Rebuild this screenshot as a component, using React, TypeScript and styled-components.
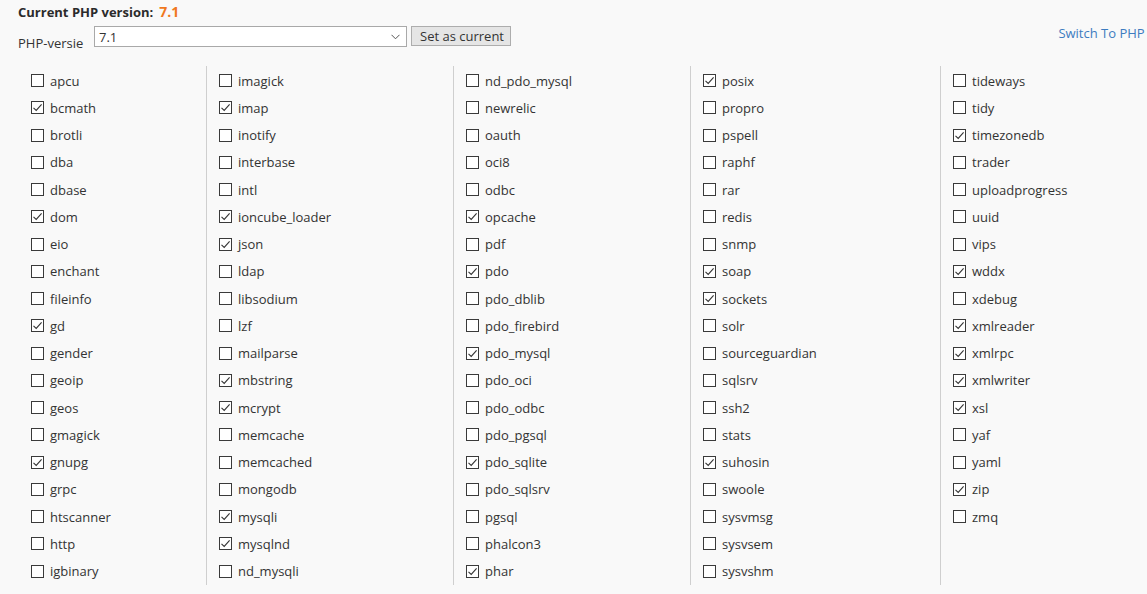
import React from 'react'
import styled, { createGlobalStyle } from 'styled-components'

const GlobalStyle = createGlobalStyle`
  html, body {
    margin: 0;
    padding: 0;
    background: #f9f9f9;
    overflow: hidden;
  }
  body {
    font-family: "Open Sans", "Liberation Sans", sans-serif;
    font-size: 13px;
    color: #333;
  }
`

const columns: string[][] = [
  ['apcu', '+bcmath', 'brotli', 'dba', 'dbase', '+dom', 'eio', 'enchant', 'fileinfo', '+gd', 'gender', 'geoip', 'geos', 'gmagick', '+gnupg', 'grpc', 'htscanner', 'http', 'igbinary'],
  ['imagick', '+imap', 'inotify', 'interbase', 'intl', '+ioncube_loader', '+json', 'ldap', 'libsodium', 'lzf', 'mailparse', '+mbstring', '+mcrypt', 'memcache', 'memcached', 'mongodb', '+mysqli', '+mysqlnd', 'nd_mysqli'],
  ['nd_pdo_mysql', 'newrelic', 'oauth', 'oci8', 'odbc', '+opcache', 'pdf', '+pdo', 'pdo_dblib', 'pdo_firebird', '+pdo_mysql', 'pdo_oci', 'pdo_odbc', 'pdo_pgsql', '+pdo_sqlite', 'pdo_sqlsrv', 'pgsql', 'phalcon3', '+phar'],
  ['+posix', 'propro', 'pspell', 'raphf', 'rar', 'redis', 'snmp', '+soap', '+sockets', 'solr', 'sourceguardian', 'sqlsrv', 'ssh2', 'stats', '+suhosin', 'swoole', 'sysvmsg', 'sysvsem', 'sysvshm'],
  ['tideways', 'tidy', '+timezonedb', 'trader', 'uploadprogress', 'uuid', 'vips', '+wddx', 'xdebug', '+xmlreader', '+xmlrpc', '+xmlwriter', '+xsl', 'yaf', 'yaml', '+zip', 'zmq'],
]

const Page = styled.div`
  padding: 0 0 0 18px;
`

const Title = styled.div`
  height: 25px;
  padding-top: 2px;
  box-sizing: border-box;
  font-weight: 700;
  font-size: 13px;
  color: #2b2b2b;
  line-height: 20px;
`

const Version = styled.span`
  color: #f0781e;
  font-size: 14px;
  margin-left: 6px;
`

const SelectRow = styled.div`
  display: flex;
  align-items: flex-start;
  width: 1178px;
  height: 41px;
`

const Label = styled.label`
  width: 76px;
  padding-top: 9px;
  line-height: 18px;
  color: #333;
`

const FakeSelect = styled.div`
  width: 313px;
  height: 21px;
  margin-top: 1px;
  box-sizing: border-box;
  border: 1px solid #a9a9a9;
  background: #fff;
  display: flex;
  align-items: center;
  justify-content: space-between;
  padding: 0 6px 0 4px;
  line-height: 18px;
  color: #333;
`

const Button = styled.button`
  margin-left: 4px;
  margin-top: 1px;
  width: 100px;
  height: 20px;
  box-sizing: border-box;
  border: 1px solid #adadad;
  background: #e5e5e5;
  font-family: inherit;
  font-size: 13px;
  color: #333;
  padding: 0 0 0 2px;
  line-height: 18px;
`

const SwitchLink = styled.a`
  margin-left: auto;
  color: #3d7cc0;
  text-decoration: none;
  white-space: nowrap;
  line-height: 16px;
`

const Grid = styled.div`
  display: grid;
  grid-template-columns: 188px 247px 237px 250px 1fr;
`

const Column = styled.div<{ $first?: boolean }>`
  border-left: ${p => (p.$first ? 'none' : '1px solid #cfcfcf')};
  padding-left: ${p => (p.$first ? '13px' : '12px')};
  padding-top: 1px;
  height: 518px;
`

const Row = styled.div`
  display: flex;
  align-items: center;
  height: 27.25px;
`

const Box = styled.span`
  width: 13px;
  height: 13px;
  box-sizing: border-box;
  border: 1px solid #3a3a3a;
  background: #fff;
  display: flex;
  align-items: center;
  justify-content: center;
  margin-right: 6px;
  flex-shrink: 0;
`

const Name = styled.span`
  color: #333;
  line-height: 18px;
`

const Check = () => (
  <svg width="11" height="11" viewBox="0 0 11 11">
    <path d="M1.5 5.8 L4.2 8.4 L9.6 2.4" fill="none" stroke="#333" strokeWidth="1.1" />
  </svg>
)

export default function App() {
  return (
    <Page>
      <GlobalStyle />
      <Title>
        Current PHP version:<Version>7.1</Version>
      </Title>
      <SelectRow>
        <Label>PHP-versie</Label>
        <FakeSelect>
          <span>7.1</span>
          <svg width="9" height="6" viewBox="0 0 9 6">
            <path d="M0.5 0.8 L4.5 4.8 L8.5 0.8" fill="none" stroke="#555" strokeWidth="1" />
          </svg>
        </FakeSelect>
        <Button>Set as current</Button>
        <SwitchLink href="#">Switch To PHP Options</SwitchLink>
      </SelectRow>
      <Grid>
        {columns.map((col, i) => (
          <Column key={i} $first={i === 0}>
            {col.map(item => {
              const on = item.startsWith('+')
              const name = on ? item.slice(1) : item
              return (
                <Row key={name}>
                  <Box>{on && <Check />}</Box>
                  <Name>{name}</Name>
                </Row>
              )
            })}
          </Column>
        ))}
      </Grid>
    </Page>
  )
}
